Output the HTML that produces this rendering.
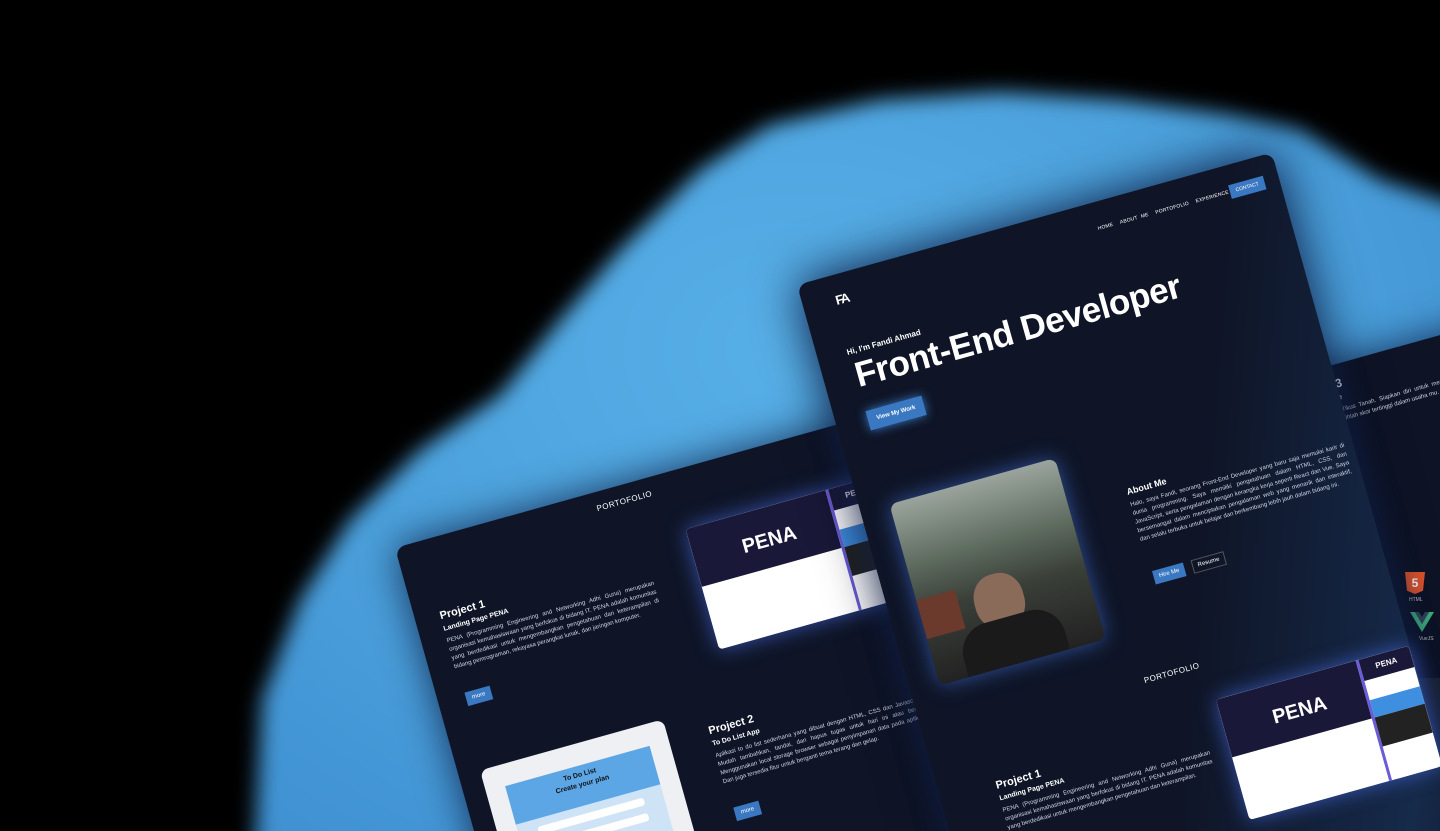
<!DOCTYPE html>
<html><head><meta charset="utf-8"><style>
*{margin:0;padding:0;box-sizing:border-box}
html,body{width:1440px;height:831px;overflow:hidden}
body{background:#000;position:relative;font-family:"Liberation Sans",sans-serif;color:#fff}
.wrap{position:absolute;left:0;top:0;width:1500px;height:950px;filter:blur(10px)}
.blob{position:absolute;left:0;top:0;width:1500px;height:950px;background:radial-gradient(ellipse at 800px 350px,#58b0e8 0%,#4a9fdb 45%,#3d8ed0 80%);
clip-path:polygon(250px 950px,262px 700px,300px 600px,350px 520px,420px 450px,500px 395px,560px 320px,620px 250px,700px 170px,770px 125px,880px 100px,1000px 92px,1120px 100px,1230px 115px,1300px 130px,1380px 180px,1500px 220px,1500px 950px)}
.panel{position:absolute;background:#0f1527;transform-origin:0 0;transform:rotate(-15.6deg);border-radius:10px;box-shadow:0 0 40px rgba(0,0,30,.7)}
.p{position:absolute}
.txt{font-size:6px;line-height:9px;color:#cfd6e4;text-align:justify}
.btn{position:absolute;background:#3a78c2;color:#fff;font-size:6px;display:flex;align-items:center;justify-content:center}
.thumb{position:absolute;background:#1c1f3a;border-radius:4px;overflow:hidden}
</style></head><body>
<div class="wrap"><div class="blob"></div></div>

<div class="panel" style="left:1100px;top:430px;width:700px;height:800px;background:#0e1426">
  <div class="p" style="left:195px;top:12px;font-size:12px;font-weight:bold">Project 3</div>
  <div class="p" style="left:195px;top:30px;font-size:7px;font-weight:bold">Whack-a-Mole</div>
  <div class="p txt" style="left:195px;top:42px;width:230px">Whack-a-Mole: Tikus Tanah. Siapkan diri untuk memukul tikus-tikus yang muncul dengan cepat, raihlah skor tertinggi dalam usaha mu.</div>
</div>
<div class="p" style="left:1405px;top:572px;width:20px;height:22px;background:#e4572e;clip-path:polygon(0 0,100% 0,90% 85%,50% 100%,10% 85%);color:#fff;font-size:12px;font-weight:bold;text-align:center;line-height:22px">5</div>
<div class="p" style="left:1409px;top:597px;font-size:5px;color:#ccc">HTML</div>
<svg class="p" style="left:1410px;top:612px" width="24" height="20" viewBox="0 0 24 20"><path d="M0 0h5l7 12 7-12h5L12 20z" fill="#41b883"/><path d="M5 0h4l3 5 3-5h4l-7 12z" fill="#35495e"/></svg>
<div class="p" style="left:1419px;top:636px;font-size:5px;color:#ccc">VueJS</div>
<div class="p" style="left:1416px;top:678px;width:30px;height:125px;background:#1d2535"></div>

<div class="panel" style="left:395px;top:548px;width:540px;height:600px">
  <div class="p" style="left:205px;top:12px;font-size:8px;letter-spacing:.5px">PORTOFOLIO</div>
  <div class="p" style="left:25px;top:72px;font-size:11px;font-weight:bold">Project 1</div>
  <div class="p" style="left:25px;top:88px;font-size:7px;font-weight:bold">Landing Page PENA</div>
  <div class="p txt" style="left:25px;top:100px;width:215px">PENA (Programming Engineering and Networking Adhi Guna) merupakan organisasi kemahasiswaan yang berfokus di bidang IT. PENA adalah komunitas yang berdedikasi untuk mengembangkan pengetahuan dan keterampilan di bidang pemrograman, rekayasa perangkat lunak, dan jaringan komputer.</div>
  <div class="btn" style="left:28px;top:158px;width:26px;height:14px">more</div>
  <div class="thumb" style="left:285px;top:60px;width:200px;height:125px;background:#fff;box-shadow:0 0 20px rgba(80,120,255,.6)">
    <div style="height:60px;background:#1a1838;color:#fff;font-weight:bold;font-size:20px;padding:22px 0 0 50px">PENA</div>
    <div style="position:absolute;right:0;top:0;width:55px;height:125px;background:#fff;border-left:3px solid #6a5bd6"><div style="height:22px;background:#1a1838;color:#fff;font-size:8px;font-weight:bold;text-align:center;padding-top:6px">PENA</div><div style="margin-top:20px;height:18px;background:#3f8fe0"></div><div style="height:30px;background:#222"></div></div>
  </div>
  <div class="p" style="left:253px;top:255px;font-size:11px;font-weight:bold">Project 2</div>
  <div class="p" style="left:253px;top:271px;font-size:7px;font-weight:bold">To Do List App</div>
  <div class="p txt" style="left:253px;top:283px;width:215px">Aplikasi to do list sederhana yang dibuat dengan HTML, CSS dan Javascript. Mudah tambahkan, tandai, dan hapus tugas untuk hari ini atau besok. Menggunakan local storage browser sebagai penyimpanan data pada aplikasi. Dan juga tersedia fitur untuk berganti tema terang dan gelap.</div>
  <div class="btn" style="left:256px;top:341px;width:26px;height:14px">more</div>
  <div class="p" style="left:22px;top:237px;width:190px;height:150px;background:#eef0f3;border-radius:8px">
    <div style="position:absolute;left:20px;top:22px;width:150px;height:40px;background:#5ca6e6;color:#111;font-size:7px;font-weight:bold;text-align:center;padding-top:5px;line-height:10px">To Do List<br>Create your plan</div>
    <div style="position:absolute;left:20px;top:62px;width:150px;height:80px;background:#cfe3f6"><div style="margin:8px 20px;height:8px;background:#fff;border-radius:3px"></div><div style="margin:8px 20px;height:8px;background:#fff;border-radius:3px"></div></div>
  </div>
</div>

<div class="panel" style="left:797px;top:285px;width:493px;height:900px;background:linear-gradient(110deg,#0f1527 55%,#162a4a 85%,#0f1527 100%);box-shadow:0 0 50px rgba(0,0,20,.8),0 0 30px rgba(60,120,220,.4)">
  <div class="p" style="left:33px;top:18px;font-size:13px;font-weight:bold;letter-spacing:-2px">FA</div>
  <div class="p" style="left:305px;top:24px;font-size:5px;word-spacing:2px;letter-spacing:.2px;white-space:nowrap">HOME &nbsp;ABOUT ME &nbsp;PORTOFOLIO &nbsp;EXPERIENCE</div>
  <div class="btn" style="left:442px;top:20px;width:36px;height:14px;font-size:5px">CONTACT</div>
  <div class="p" style="left:30px;top:74px;font-size:8px;font-weight:bold">Hi, I'm Fandi Ahmad</div>
  <div class="p" style="left:32px;top:84px;font-size:35px;font-weight:bold;letter-spacing:-.5px;white-space:nowrap">Front-End Developer</div>
  <div class="btn" style="left:32px;top:140px;width:58px;height:20px;font-weight:bold;box-shadow:0 0 10px #3a78c2">View My Work</div>
  <div class="p" style="left:30px;top:236px;width:172px;height:188px;border-radius:8px;background:linear-gradient(180deg,#9aa49c 0%,#5d6a5e 35%,#3a3f38 60%,#222 100%);box-shadow:0 0 20px rgba(70,120,230,.6);overflow:hidden">
    <div style="position:absolute;left:55px;top:95px;width:50px;height:55px;border-radius:45%;background:#8a6a58"></div>
    <div style="position:absolute;left:30px;top:140px;width:105px;height:48px;background:#1a1a1a;border-radius:30px 30px 0 0"></div>
    <div style="position:absolute;left:0;top:100px;width:40px;height:40px;background:#6b3a2d"></div>
  </div>
  <div class="p" style="left:262px;top:283px;font-size:9px;font-weight:bold">About Me</div>
  <div class="p txt" style="left:262px;top:298px;width:222px">Halo, saya Fandi, seorang Front-End Developer yang baru saja memulai karir di dunia programming. Saya memiliki pengetahuan dalam HTML, CSS, dan JavaScript, serta pengalaman dengan kerangka kerja seperti React dan Vue. Saya bersemangat dalam menciptakan pengalaman web yang menarik dan interaktif, dan selalu terbuka untuk belajar dan berkembang lebih jauh dalam bidang ini.</div>
  <div class="btn" style="left:265px;top:371px;width:32px;height:14px">Hire Me</div>
  <div class="btn" style="left:305px;top:371px;width:34px;height:14px;background:none;border:1px solid #555">Resume</div>
  <div class="p" style="left:228px;top:470px;font-size:8px;letter-spacing:.5px">PORTOFOLIO</div>
  <div class="p" style="left:57px;top:530px;font-size:11px;font-weight:bold">Project 1</div>
  <div class="p" style="left:57px;top:546px;font-size:7px;font-weight:bold">Landing Page PENA</div>
  <div class="p txt" style="left:57px;top:558px;width:215px">PENA (Programming Engineering and Networking Adhi Guna) merupakan organisasi kemahasiswaan yang berfokus di bidang IT. PENA adalah komunitas yang berdedikasi untuk mengembangkan pengetahuan dan keterampilan.</div>
  <div class="thumb" style="left:292px;top:512px;width:200px;height:125px;background:#fff;box-shadow:0 0 20px rgba(80,120,255,.6)">
    <div style="height:60px;background:#1a1838;color:#fff;font-weight:bold;font-size:20px;padding:22px 0 0 50px">PENA</div>
    <div style="position:absolute;right:0;top:0;width:55px;height:125px;background:#fff;border-left:3px solid #6a5bd6"><div style="height:22px;background:#1a1838;color:#fff;font-size:8px;font-weight:bold;text-align:center;padding-top:6px">PENA</div><div style="margin-top:20px;height:18px;background:#3f8fe0"></div><div style="height:30px;background:#222"></div></div>
  </div>
</div>
</body></html>
